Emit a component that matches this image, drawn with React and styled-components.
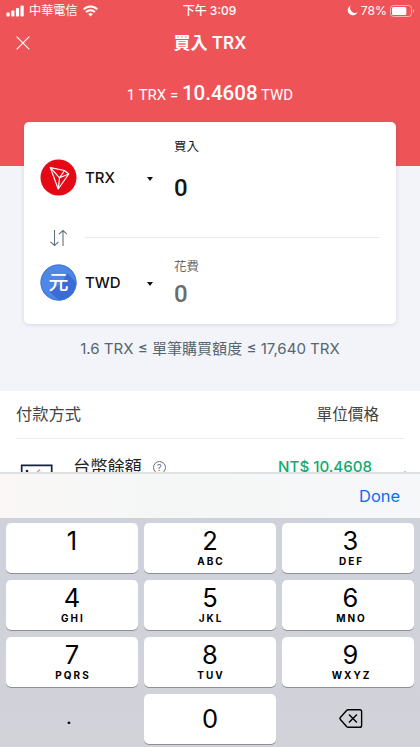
import React from 'react';
import styled, { createGlobalStyle, css } from 'styled-components';

const colors = {
  red: '#ee5457',
  page: '#f3f4f9',
  slate: '#546670',
  green: '#0fab72',
  blue: '#0a6cf5',
};

const keys = [
  { digit: '1' },
  { digit: '2', letters: 'ABC' },
  { digit: '3', letters: 'DEF' },
  { digit: '4', letters: 'GHI' },
  { digit: '5', letters: 'JKL' },
  { digit: '6', letters: 'MNO' },
  { digit: '7', letters: 'PQRS' },
  { digit: '8', letters: 'TUV' },
  { digit: '9', letters: 'WXYZ' },
];

const GlobalStyle = createGlobalStyle`
  * {
    box-sizing: border-box;
  }

  body {
    margin: 0;
    overflow: hidden;
    font-family: Inter, 'Noto Sans CJK TC', sans-serif;
  }

  button {
    padding: 0;
    border: 0;
    background: none;
    color: inherit;
    font: inherit;
  }

  svg {
    display: block;
    flex: none;
  }
`;

const Screen = styled.div`
  display: flex;
  flex-direction: column;
  width: 420px;
  height: 747px;
  overflow: hidden;
`;

const Page = styled.main`
  flex: none;
  height: 472px;
  overflow: hidden;
  background: linear-gradient(${colors.red} 166px, ${colors.page} 166px);
`;

const StatusBar = styled.div`
  display: grid;
  grid-template-columns: 1fr auto 1fr;
  align-items: center;
  height: 21px;
  padding: 0 5px 0 6px;
  color: #fff;
  font-size: 12.2px;
  line-height: 20px;
`;

const StatusGroup = styled.div`
  display: flex;
  align-items: center;
  justify-content: ${({ $end }) => ($end ? 'flex-end' : 'flex-start')};
  gap: ${({ $end }) => ($end ? '3px' : '5px')};
`;

const Clock = styled.span`
  padding-right: 2px;
  font-size: 12px;
  font-weight: 500;
`;

const NavBar = styled.header`
  display: grid;
  grid-template-columns: 20px 1fr 20px;
  align-items: center;
  height: 44px;
  padding: 0 16px;
  color: #fff;
`;

const Title = styled.h1`
  margin: 0;
  font-size: 17px;
  font-weight: 600;
  line-height: 24px;
  text-align: center;
`;

const Rate = styled.div`
  height: 57px;
  padding-top: 14px;
  color: #fff;
  font-family: Roboto, sans-serif;
  font-size: 15px;
  line-height: 28px;
  text-align: center;

  strong {
    font-size: 20.5px;
    font-weight: 500;
  }
`;

const Card = styled.section`
  height: 202px;
  margin: 0 24px;
  padding: 0 16px;
  border-radius: 5px;
  background: #fff;
  box-shadow: 0 1px 4px rgba(60, 70, 110, 0.16);
`;

const CurrencyRow = styled.div`
  display: grid;
  grid-template-columns: 37px 1fr 10px 223px;
  align-items: center;
  height: ${({ $first }) => ($first ? '111px' : '80px')};
`;

const CurrencyName = styled.span`
  padding-left: 8px;
  color: #111;
  font-size: 15px;
  font-weight: 500;
`;

const Caret = styled.span`
  width: 0;
  height: 0;
  margin-top: 3px;
  border: 3px solid transparent;
  border-top: 4px solid #111;
  border-bottom: 0;
`;

const Amount = styled.div`
  display: flex;
  flex-direction: column;
  padding-left: 17px;
  margin-top: ${({ $muted }) => ($muted ? '2px' : '-14px')};
  color: ${({ $muted }) => ($muted ? '#6b6b6b' : '#161616')};
`;

const AmountLabel = styled.span`
  font-size: 12.4px;
  line-height: 18px;
`;

const AmountValue = styled.span`
  margin-top: ${({ $muted }) => ($muted ? '3px' : '17px')};
  font-family: Roboto, sans-serif;
  font-size: 24px;
  font-weight: 500;
  line-height: 30px;
`;

const SwapRow = styled.div`
  display: flex;
  align-items: center;
  height: 9px;
  padding-left: 9px;
  gap: 18px;
`;

const Rule = styled.hr`
  flex: 1;
  margin: 0;
  border: 0;
  border-top: 1px solid #e8eaee;
`;

const Limit = styled.p`
  height: 67px;
  margin: 0;
  padding-top: 13px;
  color: ${colors.slate};
  font-size: 15.05px;
  line-height: 24px;
  text-align: center;
`;

const Methods = styled.section`
  height: 120px;
  padding: 0 16px;
  background: #fff;
`;

const MethodsHead = styled.div`
  display: flex;
  align-items: baseline;
  justify-content: space-between;
  height: 48px;
  padding: 11px 25px 0 0;
  border-bottom: 1px solid #ececee;
  color: #444;
  font-size: 16.3px;
  line-height: 24px;
`;

const UnitPrice = styled.span`
  font-size: 15.6px;
`;

const Method = styled.div`
  display: flex;
  align-items: flex-start;
  padding: 16px 0 0 4px;
`;

const MethodName = styled.span`
  margin-left: 20px;
  color: #222;
  font-size: 17.2px;
  line-height: 24px;
`;

const MethodPrice = styled.span`
  margin-left: auto;
  margin-right: 29px;
  color: ${colors.green};
  font-size: 15.1px;
  font-weight: 500;
  line-height: 23px;
`;

const Accessory = styled.div`
  display: flex;
  flex: none;
  align-items: center;
  justify-content: flex-end;
  height: 46px;
  padding-right: 20px;
  border-top: 2px solid #dfe0e2;
  background: linear-gradient(90deg, #faf7f6, #f5f7f7 35%, #f6f7f8);
`;

const DoneButton = styled.button`
  color: ${colors.blue};
  font-size: 16.4px;
  line-height: 24px;
`;

const Keypad = styled.div`
  display: grid;
  flex: none;
  grid-template-columns: repeat(3, 132px);
  grid-auto-rows: 50px;
  gap: 7px 6px;
  height: 229px;
  padding: 5px 6px 0;
  background: linear-gradient(#cfd2db, #d2d2d9);
`;

const raised = css`
  background: #fff;
  box-shadow: 0 1px 0 #8d8f94;
`;

const Key = styled.button`
  display: flex;
  flex-direction: column;
  align-items: center;
  border-radius: 5px;
  color: #000;
  ${({ $plain }) => !$plain && raised};
  ${({ $center }) => $center && 'justify-content: center;'};

  &:nth-child(3n) {
    padding-left: 5px;
  }
`;

const Digit = styled.span`
  margin-top: ${({ $alone }) => ($alone ? '0' : '4px')};
  font-size: 25.5px;
  line-height: 28px;
`;

const Point = styled.span`
  padding: 0 6px 5px 0;
  font-size: 20px;
  line-height: 24px;
`;

const Letters = styled.span`
  margin-top: -1px;
  padding-left: 2px;
  font-size: 10px;
  font-weight: 700;
  letter-spacing: 2px;
  line-height: 15px;
`;

const SignalIcon = () => (
  <svg width="18" height="12" viewBox="0 0 18 12" fill="#fff">
    <rect x="0.5" y="7.5" width="3.2" height="4" rx="0.8" />
    <rect x="5.2" y="5.5" width="3.2" height="6" rx="0.8" />
    <rect x="9.9" y="3" width="3.2" height="8.5" rx="0.8" />
    <rect x="14.5" y="0.5" width="3.2" height="11" rx="0.8" />
  </svg>
);

const WifiIcon = () => (
  <svg width="15" height="12" viewBox="0 0 15 12" fill="none" stroke="#fff" strokeWidth="2">
    <path d="M0.7 4.4a9.6 9.6 0 0 1 13.6 0" />
    <path d="M3.1 7a6.2 6.2 0 0 1 8.8 0" />
    <path d="M7.5 11.4 5.2 9.1a3.3 3.3 0 0 1 4.6 0z" fill="#fff" stroke="none" />
  </svg>
);

const MoonIcon = () => (
  <svg width="11" height="11" viewBox="0 0 11 11">
    <path d="M3.7.4A5.2 5.2 0 1 0 10.6 7.3 5.1 5.1 0 0 1 3.7.4z" fill="#fff" />
  </svg>
);

const BatteryIcon = () => (
  <svg width="25" height="12" viewBox="0 0 25 12">
    <rect x="0.5" y="0.5" width="21" height="11" rx="3" fill="none" stroke="#f9b4b5" />
    <rect x="2" y="2" width="14.3" height="8" rx="1.5" fill="#fff" />
    <path d="M23 4v4c1.6-.6 1.6-3.4 0-4z" fill="#f9b4b5" />
  </svg>
);

const CloseIcon = () => (
  <svg width="14" height="14" viewBox="0 0 14 14" stroke="#fff" strokeWidth="1.1">
    <path d="M0.7 0.7 13.3 13.3M13.3 0.7 0.7 13.3" />
  </svg>
);

const TronLogo = () => (
  <svg width="37" height="37" viewBox="0 0 37 37">
    <circle cx="18.5" cy="18.5" r="18" fill="#e50915" />
    <g fill="none" stroke="#fff" strokeWidth="1.2" strokeLinejoin="round">
      <path d="M10.3 8.6 24.5 11.5 28.8 15 18.2 30z" />
      <path d="M10.3 8.6 19.6 18.8 18.2 30M19.6 18.8 28.8 15M19.6 18.8 24.5 11.5" />
    </g>
  </svg>
);

const YuanLogo = () => (
  <svg width="37" height="37" viewBox="0 0 37 37">
    <defs>
      <clipPath id="coin">
        <circle cx="18.5" cy="18.5" r="18" />
      </clipPath>
    </defs>
    <circle cx="18.5" cy="18.5" r="18" fill="#4e87e4" />
    <path d="M27 9 45 27v18H28L10 28l12-9z" fill="#3b6cd6" clipPath="url(#coin)" />
    <circle cx="18.5" cy="18.5" r="17.5" fill="none" stroke="#3f76de" />
    <text
      x="18.5"
      y="25.8"
      fill="#fff"
      fontFamily="'Noto Sans CJK TC', sans-serif"
      fontSize="20"
      fontWeight="500"
      textAnchor="middle"
    >
      元
    </text>
  </svg>
);

const SwapIcon = () => (
  <svg width="18" height="18" viewBox="0 0 18 18" fill="none" stroke="#60727c" strokeWidth="1.1">
    <path d="M5.5 1v15.5M1.5 12.8l4 3.7 4-3.7" />
    <path d="M14 17V1.5M10 5.2l4-3.7 4 3.7" />
  </svg>
);

const WalletIcon = styled(({ className }) => (
  <svg className={className} width="33" height="24" viewBox="0 0 33 24" fill="none">
    <path d="M1.7 24V1.3h30V24" stroke="#13233b" strokeWidth="1.7" />
    <circle cx="7" cy="7" r="1.3" fill="#13233b" />
    <path d="m17 8.5 3-3" stroke="#f08a8c" strokeWidth="1.5" />
  </svg>
))`
  margin-top: 9px;
`;

const HelpIcon = styled.span`
  display: flex;
  justify-content: center;
  width: 13px;
  height: 13px;
  margin: 6px 0 0 11px;
  border: 1px solid #60727c;
  border-radius: 50%;
  color: #60727c;
  font-size: 9.5px;
  line-height: 11px;
`;

const Chevron = styled(({ className }) => (
  <svg className={className} width="8" height="5" viewBox="0 0 8 5" fill="none">
    <path d="m0.5 4.5 3.5-4 3.5 4" stroke="#ee5457" />
  </svg>
))`
  margin: 16px -5px 0 0;
`;

const DeleteIcon = styled(({ className }) => (
  <svg
    className={className}
    width="24"
    height="21"
    viewBox="0 0 26 22"
    fill="none"
    stroke="#000"
    strokeWidth="1.5"
  >
    <path
      d="M10 1.5h12.5a2 2 0 0 1 2 2v15a2 2 0 0 1-2 2H10a2.5 2.5 0 0 1-1.8-.8L1.5 12a1.5 1.5 0 0 1 0-2l6.7-7.7A2.5 2.5 0 0 1 10 1.5z"
      strokeLinejoin="round"
    />
    <path d="m10.8 6.7 8.6 8.6M19.4 6.7l-8.6 8.6" />
  </svg>
))`
  margin-bottom: 2px;
`;

const Currency = ({ logo, name, label, first }) => (
  <CurrencyRow $first={first}>
    {logo}
    <CurrencyName>{name}</CurrencyName>
    <Caret />
    <Amount $muted={!first}>
      <AmountLabel>{label}</AmountLabel>
      <AmountValue $muted={!first}>0</AmountValue>
    </Amount>
  </CurrencyRow>
);

const App = () => (
  <Screen>
    <GlobalStyle />
    <Page>
      <StatusBar>
        <StatusGroup>
          <SignalIcon />
          <span>中華電信</span>
          <WifiIcon />
        </StatusGroup>
        <Clock>下午 3:09</Clock>
        <StatusGroup $end>
          <MoonIcon />
          <span>78%</span>
          <BatteryIcon />
        </StatusGroup>
      </StatusBar>
      <NavBar>
        <CloseIcon />
        <Title>買入 TRX</Title>
      </NavBar>
      <Rate>
        1 TRX = <strong>10.4608</strong> TWD
      </Rate>
      <Card>
        <Currency first logo={<TronLogo />} name="TRX" label="買入" />
        <SwapRow>
          <SwapIcon />
          <Rule />
        </SwapRow>
        <Currency logo={<YuanLogo />} name="TWD" label="花費" />
      </Card>
      <Limit>1.6 TRX ≤ 單筆購買額度 ≤ 17,640 TRX</Limit>
      <Methods>
        <MethodsHead>
          <span>付款方式</span>
          <UnitPrice>單位價格</UnitPrice>
        </MethodsHead>
        <Method>
          <WalletIcon />
          <MethodName>台幣餘額</MethodName>
          <HelpIcon>?</HelpIcon>
          <MethodPrice>NT$ 10.4608</MethodPrice>
          <Chevron />
        </Method>
      </Methods>
    </Page>
    <Accessory>
      <DoneButton>Done</DoneButton>
    </Accessory>
    <Keypad>
      {keys.map(({ digit, letters }) => (
        <Key key={digit}>
          <Digit>{digit}</Digit>
          {letters && <Letters>{letters}</Letters>}
        </Key>
      ))}
      <Key $plain $center>
        <Point>.</Point>
      </Key>
      <Key $center>
        <Digit $alone>0</Digit>
      </Key>
      <Key $plain $center>
        <DeleteIcon />
      </Key>
    </Keypad>
  </Screen>
);

export default App;
